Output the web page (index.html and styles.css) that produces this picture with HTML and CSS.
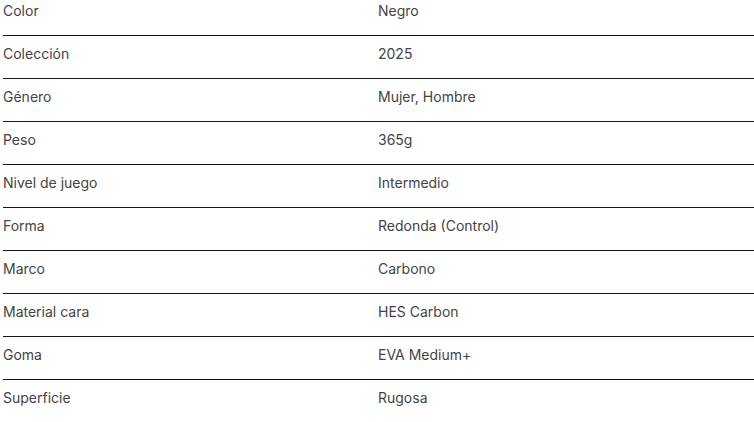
FILE: index.html
```html
<!DOCTYPE html>
<html lang="es">
<head>
<meta charset="utf-8">
<title>Especificaciones</title>
<link rel="stylesheet" href="styles.css">
</head>
<body>
<div class="specs">
  <div class="row first"><div class="label">Color</div><div class="value">Negro</div></div>
  <div class="row"><div class="label">Colección</div><div class="value">2025</div></div>
  <div class="row"><div class="label">Género</div><div class="value">Mujer, Hombre</div></div>
  <div class="row"><div class="label">Peso</div><div class="value">365g</div></div>
  <div class="row"><div class="label">Nivel de juego</div><div class="value">Intermedio</div></div>
  <div class="row"><div class="label">Forma</div><div class="value">Redonda (Control)</div></div>
  <div class="row"><div class="label">Marco</div><div class="value">Carbono</div></div>
  <div class="row"><div class="label">Material cara</div><div class="value">HES Carbon</div></div>
  <div class="row"><div class="label">Goma</div><div class="value">EVA Medium+</div></div>
  <div class="row"><div class="label">Superficie</div><div class="value">Rugosa</div></div>
</div>
</body>
</html>
```
FILE: styles.css
```css
html, body {
  margin: 0;
  padding: 0;
  background: #ffffff;
}
body {
  font-family: Inter, "Noto Sans", sans-serif;
  font-size: 14px;
  line-height: 20px;
  color: #444444;
  overflow: hidden;
}
.specs {
  margin-left: 3px;
}
.row {
  display: grid;
  grid-template-columns: 375px 1fr;
  padding: 8px 0 14px;
  border-bottom: 1px solid #151515;
}
.row.first {
  padding-top: 1px;
  padding-bottom: 14px;
}
.label, .value {
  white-space: nowrap;
}
```
